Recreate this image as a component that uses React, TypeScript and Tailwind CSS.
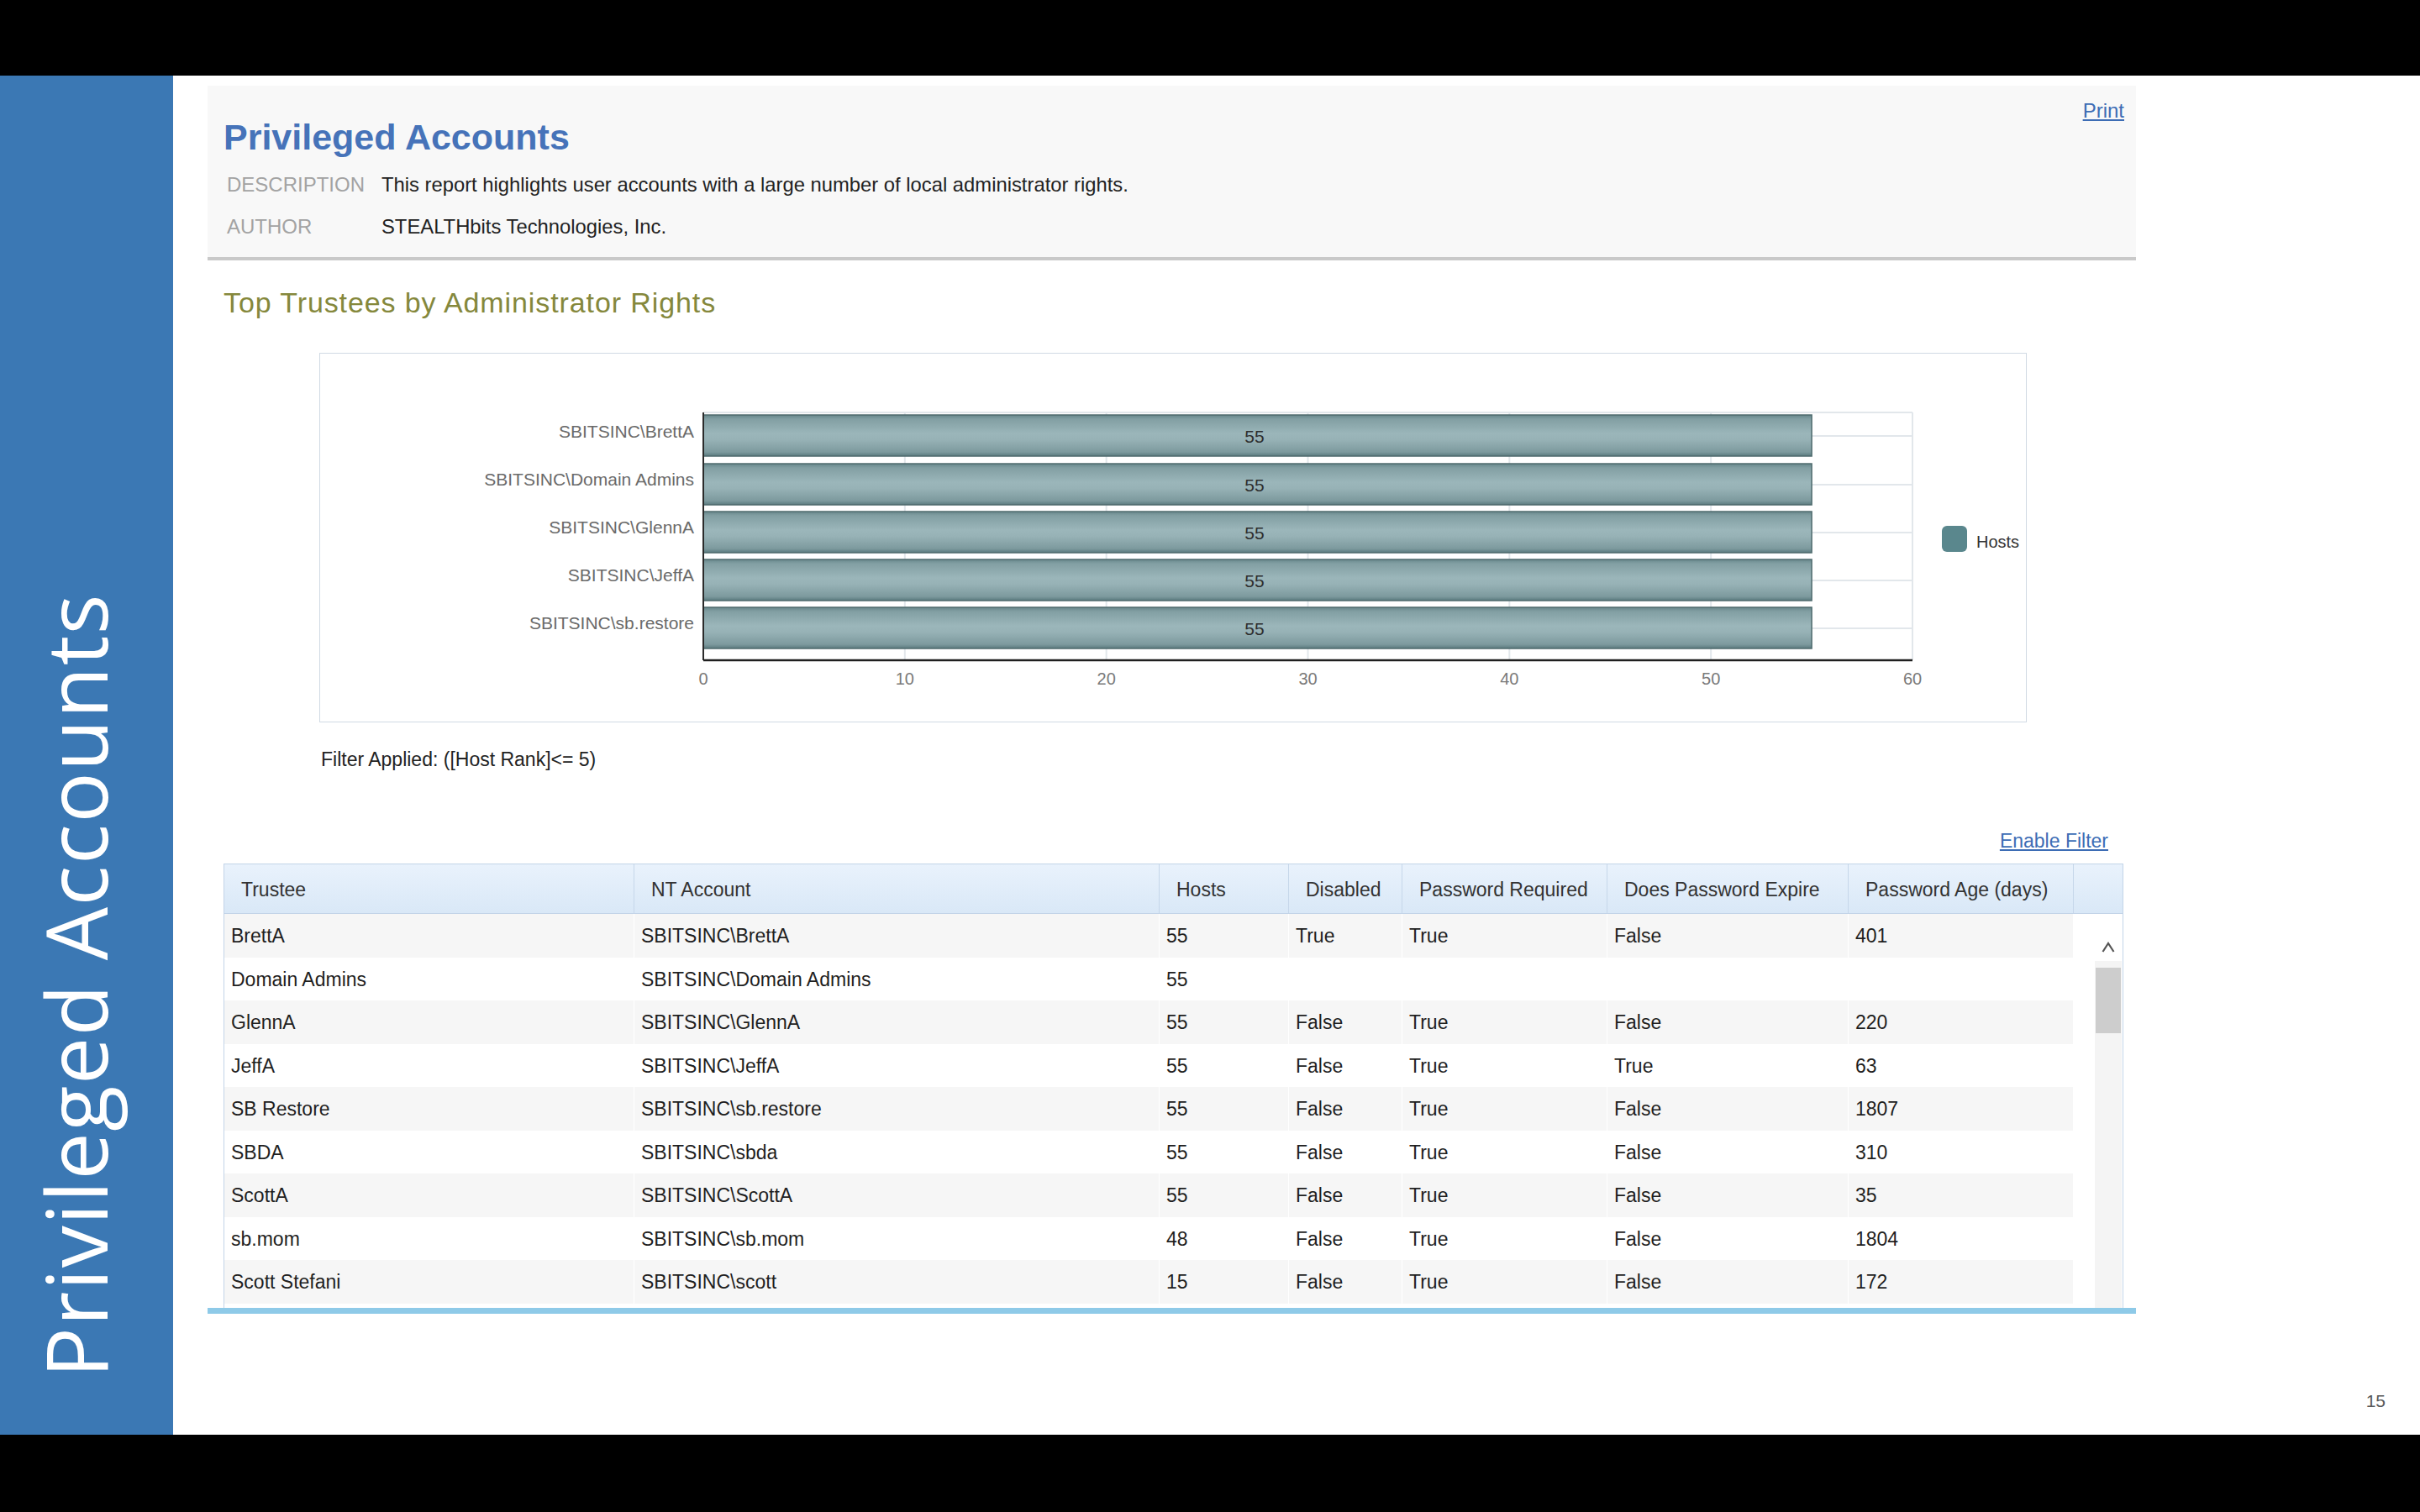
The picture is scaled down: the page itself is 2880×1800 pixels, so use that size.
import React from "react";

const trustees = [
  "SBITSINC\\BrettA",
  "SBITSINC\\Domain Admins",
  "SBITSINC\\GlennA",
  "SBITSINC\\JeffA",
  "SBITSINC\\sb.restore",
];

const rows = [
  ["BrettA", "SBITSINC\\BrettA", "55", "True", "True", "False", "401"],
  ["Domain Admins", "SBITSINC\\Domain Admins", "55", "", "", "", ""],
  ["GlennA", "SBITSINC\\GlennA", "55", "False", "True", "False", "220"],
  ["JeffA", "SBITSINC\\JeffA", "55", "False", "True", "True", "63"],
  ["SB Restore", "SBITSINC\\sb.restore", "55", "False", "True", "False", "1807"],
  ["SBDA", "SBITSINC\\sbda", "55", "False", "True", "False", "310"],
  ["ScottA", "SBITSINC\\ScottA", "55", "False", "True", "False", "35"],
  ["sb.mom", "SBITSINC\\sb.mom", "48", "False", "True", "False", "1804"],
  ["Scott Stefani", "SBITSINC\\scott", "15", "False", "True", "False", "172"],
];

const headers = [
  "Trustee",
  "NT Account",
  "Hosts",
  "Disabled",
  "Password Required",
  "Does Password Expire",
  "Password Age (days)",
  "",
];

function Chart() {
  const L = 457;
  const R = 1896;
  const T = 71;
  const B = 366;
  const unit = (R - L) / 60;
  const barTops = [74, 132, 189, 246, 303];
  const labelY = [93, 150, 207, 264, 321];

  return (
    <svg width="2030" height="438" style={{ fontFamily: '"Liberation Sans", Arial, sans-serif' }}>
      <defs>
        <linearGradient id="barGrad" x1="0" y1="0" x2="0" y2="1">
          <stop offset="0" stopColor="#67878b" />
          <stop offset="0.1" stopColor="#829fa3" />
          <stop offset="0.45" stopColor="#9bb6ba" />
          <stop offset="0.6" stopColor="#97b2b6" />
          <stop offset="0.9" stopColor="#7d9a9e" />
          <stop offset="1" stopColor="#5a7a7e" />
        </linearGradient>
      </defs>
      <g transform="translate(-1,-1)">
        {/* grid */}
        <line x1={L} y1={T} x2={R} y2={T} stroke="#e2e7eb" strokeWidth="2" />
        {[1, 2, 3, 4, 5, 6].map((k) => (
          <line key={k} x1={L + k * 10 * unit} y1={T} x2={L + k * 10 * unit} y2={B} stroke="#e2e7eb" strokeWidth="2" />
        ))}
        {barTops.map((t) => (
          <line key={t} x1={L} y1={t + 25} x2={R} y2={t + 25} stroke="#e2e7eb" strokeWidth="2" />
        ))}

        {/* bars */}
        {barTops.map((t, i) => (
          <g key={i}>
            <rect x={L} y={t} width={55 * unit} height={49} fill="url(#barGrad)" stroke="#4f6b6e" strokeWidth="1.5" />
            <text x={1113} y={t + 25} textAnchor="middle" dominantBaseline="central" fontSize="21" fill="#2e2e2e">
              55
            </text>
          </g>
        ))}

        {/* axes */}
        <line x1={L} y1={T} x2={L} y2={B} stroke="#2b2b2b" strokeWidth="2" />
        <line x1={L} y1={B} x2={R} y2={B} stroke="#1f1f1f" strokeWidth="2.5" />

        {/* category labels */}
        {trustees.map((name, i) => (
          <text key={name} x={446} y={labelY[i]} textAnchor="end" dominantBaseline="central" fontSize="21" fill="#6a6a6a">
            {name}
          </text>
        ))}

        {/* tick labels */}
        {[0, 10, 20, 30, 40, 50, 60].map((v) => (
          <text key={v} x={L + v * unit} y={388} textAnchor="middle" dominantBaseline="central" fontSize="20" fill="#7a7a7a">
            {v}
          </text>
        ))}

        {/* legend */}
        <rect x={1931} y={206} width={30} height={31} rx={6} fill="#5a878d" />
        <text x={1972} y={225} dominantBaseline="central" fontSize="20" fill="#333">
          Hosts
        </text>
      </g>
    </svg>
  );
}

export default function App() {
  return (
    <div className="w-[2880px] h-[1800px] bg-black flex flex-col font-['Liberation_Sans',Arial,sans-serif]">
      <div className="h-[90px] shrink-0" />

      <div className="h-[1618px] flex bg-white">
        {/* sidebar */}
        <div className="w-[206px] shrink-0 bg-[#3b78b4] flex flex-col justify-end pb-[68px] pl-[41px]">
          <div className="[writing-mode:vertical-rl] rotate-180 text-white text-[100px] leading-[96px] tracking-[1.5px] font-normal font-['Open_Sans','Lato',sans-serif] whitespace-nowrap">
            Privileged Accounts
          </div>
        </div>

        {/* report */}
        <div className="flex-1 flex">
          <div className="w-[2295px] shrink-0 ml-[41px] pt-[12px] flex flex-col">
            {/* header panel */}
            <div className="h-[208px] bg-[#f8f8f8] border-b-4 border-[#c9c9c9] pl-[19px] pr-[14px] pt-[18px]">
              <div className="flex justify-between items-start">
                <h1 className="mt-[21.6px] text-[43px] leading-[43px] font-bold text-[#4673b9]">Privileged Accounts</h1>
                <a className="text-[24px] leading-[24px] text-[#3d6db5] underline cursor-pointer">Print</a>
              </div>
              <div className="mt-[10.4px] text-[24px] leading-[24px]">
                <div className="h-[50px] flex items-center">
                  <span className="w-[188px] pl-[4px] text-[#a3a3a3]">DESCRIPTION</span>
                  <span className="text-[23.8px] text-[#222]">
                    This report highlights user accounts with a large number of local administrator rights.
                  </span>
                </div>
                <div className="h-[50px] flex items-center">
                  <span className="w-[188px] pl-[4px] text-[#a3a3a3]">AUTHOR</span>
                  <span className="text-[23.8px] text-[#222]">STEALTHbits Technologies, Inc.</span>
                </div>
              </div>
            </div>

            {/* chart section */}
            <h2 className="mt-[33.5px] pl-[19px] text-[34px] leading-[33px] tracking-[0.9px] text-[#85883c]">
              Top Trustees by Administrator Rights
            </h2>

            <div className="mt-[43.5px] ml-[133px] w-[2032px] h-[440px] border border-[#d0dae4]">
              <Chart />
            </div>

            <div className="mt-[32.5px] ml-[135px] text-[23px] leading-[23px] text-[#222]">
              Filter Applied: ([Host Rank]&lt;= 5)
            </div>

            <div className="mt-[74px] pr-[33px] flex justify-end">
              <a className="text-[23px] leading-[23px] text-[#3d6db5] underline cursor-pointer">Enable Filter</a>
            </div>

            {/* table */}
            <div className="mt-[15.5px] ml-[19px] w-[2261px] border-x border-t border-[#c3d4e8] text-[23px] leading-[23px]">
              <div className="h-[59px] grid grid-cols-[488px_625px_154px_135px_244px_287px_268px_58px] bg-gradient-to-b from-[#e9f2fc] to-[#d9e8f7] border-b border-[#c3d4e8]">
                {headers.map((h, i) => (
                  <div
                    key={i}
                    className={`flex items-center pl-[20px] pt-[2px] text-[#333] ${i < 7 ? "border-r border-[#c6d7ea]" : ""}`}
                  >
                    {h}
                  </div>
                ))}
              </div>

              <div className="h-[469px] flex overflow-hidden">
                <div className="w-[2201px] shrink-0">
                  {rows.map((r, ri) => (
                    <div
                      key={ri}
                      className={`h-[51.5px] grid grid-cols-[488px_625px_154px_135px_244px_287px_268px] ${
                        ri % 2 === 0 ? "bg-[#f6f6f6]" : "bg-white"
                      }`}
                    >
                      {r.map((c, ci) => (
                        <div key={ci} className="flex items-center pl-[8px] pt-[2px] text-[#1f1f1f] border-r border-white">
                          {c}
                        </div>
                      ))}
                    </div>
                  ))}
                </div>

                {/* scrollbar */}
                <div className="flex-1 bg-white flex">
                  <div className="ml-[25px] w-[32px] flex flex-col">
                    <div className="h-[56px] pt-[33px] flex justify-center">
                      <svg width="16" height="14" viewBox="0 0 16 14">
                        <path d="M1.5 12 L8 2 L14.5 12" fill="none" stroke="#555" strokeWidth="2.2" />
                      </svg>
                    </div>
                    <div className="flex-1 bg-[#f4f4f4] pt-[8px] px-[1px]">
                      <div className="h-[78px] bg-[#cdcdcd]" />
                    </div>
                  </div>
                </div>
              </div>
            </div>

            <div className="h-[7px] bg-[#8ecae8]" />
          </div>

          {/* slide number */}
          <div className="flex-1 flex flex-col justify-end items-end pr-[41px] pb-[30.5px]">
            <span className="text-[21px] leading-[21px] text-[#595959]">15</span>
          </div>
        </div>
      </div>

      <div className="flex-1" />
    </div>
  );
}
